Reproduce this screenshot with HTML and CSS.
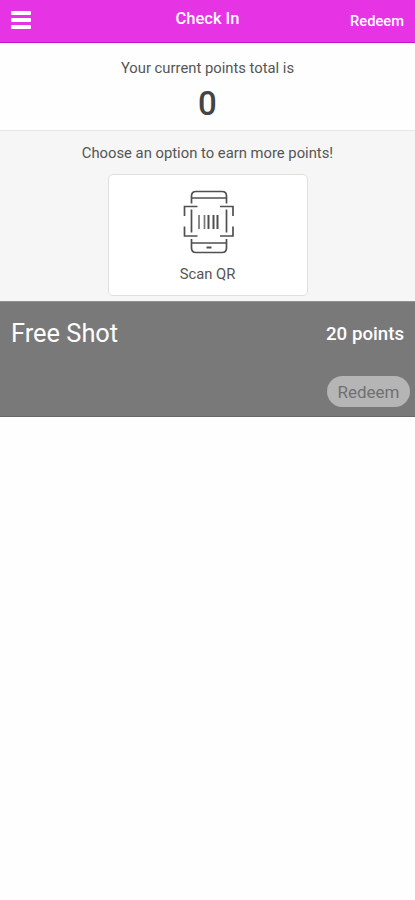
FILE: index.html
```
<!DOCTYPE html>
<html lang="en">
  <head>
    <meta charset="UTF-8" />
    <meta name="viewport" content="width=device-width, initial-scale=1.0" />
    <title>Check In</title>
    <link rel="stylesheet" href="styles.css">
  </head>
  <body>
    <header class="navbar">
      <button class="menuBtn" aria-label="Menu">
        <span></span>
        <span></span>
        <span></span>
      </button>
      <h1 class="title">Check In</h1>
      <a class="redeem_link">Redeem</a>
    </header>

    <section class="points_box">
      <p class="points_label">Your current points total is</p>
      <p class="points_total">0</p>
    </section>

    <section class="earn_box">
      <p class="earn_label">Choose an option to earn more points!</p>
      <button class="scan_card">
        <svg class="scan_icon" width="52" height="64" viewBox="0 0 52 64" fill="none" stroke="#505050" stroke-width="1.7">
          <!-- phone -->
          <path d="M9.500 13.500V6q0-4.500 4.500-4.500h26q4.500 0 4.500 4.500v7.500M9.500 49v9q0 4.500 4.500 4.500h26q4.500 0 4.500-4.500v-9" />
          <path d="M9.500 8h35M9.500 53h35M9.500 19.500v23M44.500 19.500v23" />
          <path d="M24.500 57.500h5" stroke-width="2" />
          <!-- scan frame -->
          <path d="M2.500 26v-9.500h13M38 16.500h13V26M2.500 36.500v9.500h13M38 46h13v-9.500" />
          <!-- barcode -->
          <path d="M17 25v14M22.500 25v14" stroke="#777" />
          <path d="M26.500 25v14M31.500 25v14M35.500 25v14" stroke-width="2" />
        </svg>
        <span class="scan_text">Scan QR</span>
      </button>
    </section>

    <section class="reward">
      <div class="reward_top">
        <h2 class="reward_name">Free Shot</h2>
        <span class="reward_cost">20 points</span>
      </div>
      <button class="redeemBtn" disabled>Redeem</button>
    </section>
  </body>
</html>
```
FILE: styles.css
```
* {
  box-sizing: border-box;
}
body {
  margin: 0;
  background-color: #fefefe;
  color: #555;
  font-family: Roboto, sans-serif;
  font-size: 14.8px;
}
h1,
h2,
p {
  margin: 0;
  font-weight: 400;
}
button {
  border: none;
  padding: 0;
  font-family: inherit;
}

.navbar {
  display: grid;
  grid-template-columns: 1fr auto 1fr;
  align-items: center;
  height: 43px;
  padding: 0 11px;
  background-color: #e633e4;
  border-bottom: 1px solid #cd12cb;
  color: #fff;
}
.menuBtn {
  display: flex;
  flex-direction: column;
  gap: 3px;
  width: 20px;
  padding-bottom: 2px;
  background: none;
}
.menuBtn span {
  height: 4px;
  border-radius: 1px;
  background-color: #fff;
}
.title {
  font-size: 16.5px;
  font-weight: 500;
  line-height: 20px;
  padding-bottom: 4px;
}
.redeem_link {
  justify-self: end;
  font-size: 14.7px;
  font-weight: 500;
}

.points_box {
  height: 87px;
  padding-top: 15px;
  text-align: center;
}
.points_label {
  line-height: 20px;
}
.points_total {
  margin-top: 5px;
  color: #444;
  font-size: 33px;
  font-weight: 500;
  line-height: 42px;
}

.earn_box {
  display: flex;
  flex-direction: column;
  align-items: center;
  height: 171px;
  padding-top: 12px;
  background-color: #f6f6f6;
  border-top: 1px solid #e6e6e6;
}
.earn_label {
  line-height: 20px;
}
.scan_card {
  display: flex;
  flex-direction: column;
  align-items: center;
  width: 200px;
  height: 122px;
  margin-top: 11px;
  padding-top: 15px;
  background-color: #fff;
  border: 1px solid #e0e0e0;
  border-radius: 5px;
}
.scan_text {
  margin-top: 10px;
  color: #555;
  font-size: 14.8px;
  line-height: 20px;
}

.reward {
  display: flex;
  flex-direction: column;
  align-items: flex-end;
  height: 116px;
  padding: 15px 5px 0;
  background-color: #797979;
  border-top: 1px solid #929292;
  border-bottom: 1px solid #686868;
  color: #fff;
}
.reward_top {
  display: flex;
  justify-content: space-between;
  align-items: center;
  width: 100%;
  padding: 0 6px;
}
.reward_name {
  font-size: 25.4px;
  line-height: 32px;
}
.reward_cost {
  padding-top: 1px;
  font-size: 18.7px;
  font-weight: 500;
}
.redeemBtn {
  width: 83px;
  height: 31px;
  margin-top: 27px;
  border-radius: 16px;
  background-color: #b5b5b5;
  color: #707070;
  font-size: 17px;
}
```
